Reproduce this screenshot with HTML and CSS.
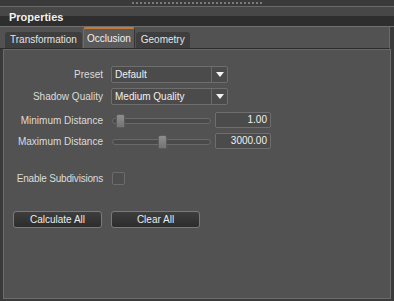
FILE: index.html
```html
<!DOCTYPE html>
<html>
<head>
  <title>Properties</title>
  <link rel="stylesheet" href="styles.css">
</head>
<body>
  <div class="grip-bar"><div class="grip"></div></div>
  <div class="header">Properties</div>
  <div class="tabs">
    <div class="tab">Transformation</div>
    <div class="tab active">Occlusion</div>
    <div class="tab">Geometry</div>
  </div>
  <div class="panel">
    <!-- Occlusion settings -->
    <div class="row first">
      <span class="label">Preset</span>
      <div class="select"><span class="value">Default</span><span class="arrow"></span></div>
    </div>
    <div class="row">
      <span class="label">Shadow Quality</span>
      <div class="select"><span class="value">Medium Quality</span><span class="arrow"></span></div>
    </div>
    <div class="row gap-md">
      <span class="label">Minimum Distance</span>
      <div class="slider"><div class="track"></div><div class="handle" style="left: 4px"></div></div>
      <div class="number">1.00</div>
    </div>
    <div class="row">
      <span class="label">Maximum Distance</span>
      <div class="slider"><div class="track"></div><div class="handle" style="left: 46px"></div></div>
      <div class="number">3000.00</div>
    </div>
    <div class="row gap-lg">
      <span class="label">Enable Subdivisions</span>
      <div class="checkbox"></div>
    </div>
    <div class="buttons">
      <button type="button">Calculate All</button>
      <button type="button">Clear All</button>
    </div>
  </div>
</body>
</html>
```

FILE: styles.css
```css
body {
  margin: 0;
  width: 394px;
  height: 301px;
  background-color: #3a3a3a;
  font-family: "Liberation Sans", Arial, sans-serif;
  font-size: 10px;
  color: #dcdcdc;
  overflow: hidden;
  display: flex;
  flex-direction: column;
}

/* Drag strip at the very top */
.grip-bar {
  height: 6px;
  border-bottom: 1px solid #6a6a6a;
  display: flex;
  justify-content: center;
}

.grip {
  width: 132px;
  height: 4px;
  margin-top: 1px;
  margin-left: 0;
  background-image: radial-gradient(circle, #7a7a7a 0.9px, transparent 1.2px);
  background-size: 4px 4px;
}

.header {
  height: 19px;
  padding-left: 9px;
  line-height: 21px;
  font-size: 11px;
  font-weight: bold;
  color: #f2f2f2;
  background: linear-gradient(#474747 0, #474747 47%, #2e2e2e 47%, #2e2e2e 100%);
  border-bottom: 1px solid #707070;
}

.tabs {
  height: 21px;
  background-color: #525252;
  display: flex;
  align-items: flex-end;
  padding-left: 5px;
  border-right: 1px solid #6a6a6a;
  margin-right: 4px;
  border-bottom: 1px solid #2c2c2c;
}

.tab {
  height: 16px;
  line-height: 16px;
  padding: 0 5px;
  margin-right: 1px;
  background-color: #3e3e3e;
  color: #e4e4e4;
  border-radius: 3px 3px 0 0;
}

.tab.active {
  height: 19px;
  line-height: 19px;
  padding: 0 3px;
  background-color: #5a5a5a;
  border-top: 2px solid #c67a36;
  border-left: 1px solid #6c6c6c;
  border-right: 1px solid #363636;
  color: #f0f0f0;
}

.panel {
  flex: 1;
  margin: 0 3px 2px 3px;
  background-color: #525252;
  border: 1px solid #6c6c6c;
  border-top: 1px solid #666;
}

.row {
  display: flex;
  align-items: center;
  margin-top: 5px;
}

.row.first {
  margin-top: 16px;
}

.row.gap-md {
  margin-top: 7px;
}

.row.gap-lg {
  margin-top: 23px;
}

.label {
  width: 99px;
  text-align: right;
  margin-right: 8px;
  white-space: nowrap;
}

.gap-lg .label {
  letter-spacing: -0.2px;
}

.select {
  width: 115px;
  height: 15px;
  display: flex;
  background-color: #4b4b4b;
  border: 1px solid #6e6e6e;
  border-radius: 2px;
  color: #f0f0f0;
}

.select .value {
  flex: 1;
  line-height: 15px;
  padding-left: 3px;
  border-right: 1px solid #6a6a6a;
}

.select .arrow {
  width: 15px;
  position: relative;
}

.select .arrow::after {
  content: "";
  position: absolute;
  left: 4px;
  top: 5px;
  border-left: 4px solid transparent;
  border-right: 4px solid transparent;
  border-top: 5px solid #f4f4f4;
}

.slider {
  position: relative;
  width: 99px;
  height: 15px;
  margin-left: 1px;
}

.track {
  position: absolute;
  left: 0;
  right: 0;
  top: 5px;
  height: 4px;
  background-color: #4a4a4a;
  border: 1px solid #6a6a6a;
  border-radius: 3px;
}

.handle {
  position: absolute;
  top: 1px;
  width: 7px;
  height: 12px;
  background: linear-gradient(#8e8e8e, #747474);
  border: 1px solid #5c5c5c;
  border-radius: 2px 2px 1px 1px;
}

.number {
  width: 51px;
  height: 14px;
  margin-left: 4px;
  padding-right: 3px;
  line-height: 14px;
  text-align: right;
  background-color: #4b4b4b;
  border: 1px solid #6e6e6e;
  border-radius: 2px;
  color: #f0f0f0;
}

.checkbox {
  width: 11px;
  height: 11px;
  margin-left: 1px;
  background-color: #4e4e4e;
  border: 1px solid #6c6c6c;
  border-radius: 2px;
}

.buttons {
  display: flex;
  margin-top: 26px;
  padding-left: 9px;
}

button[type="button"] {
  width: 89px;
  height: 17px;
  margin-right: 9px;
  padding: 0;
  font-family: "Liberation Sans", Arial, sans-serif;
  font-size: 10px;
  color: #ececec;
  background: linear-gradient(#3e3e3e, #2c2c2c);
  border: 1px solid #7a7a7a;
  border-radius: 3px;
}
```
